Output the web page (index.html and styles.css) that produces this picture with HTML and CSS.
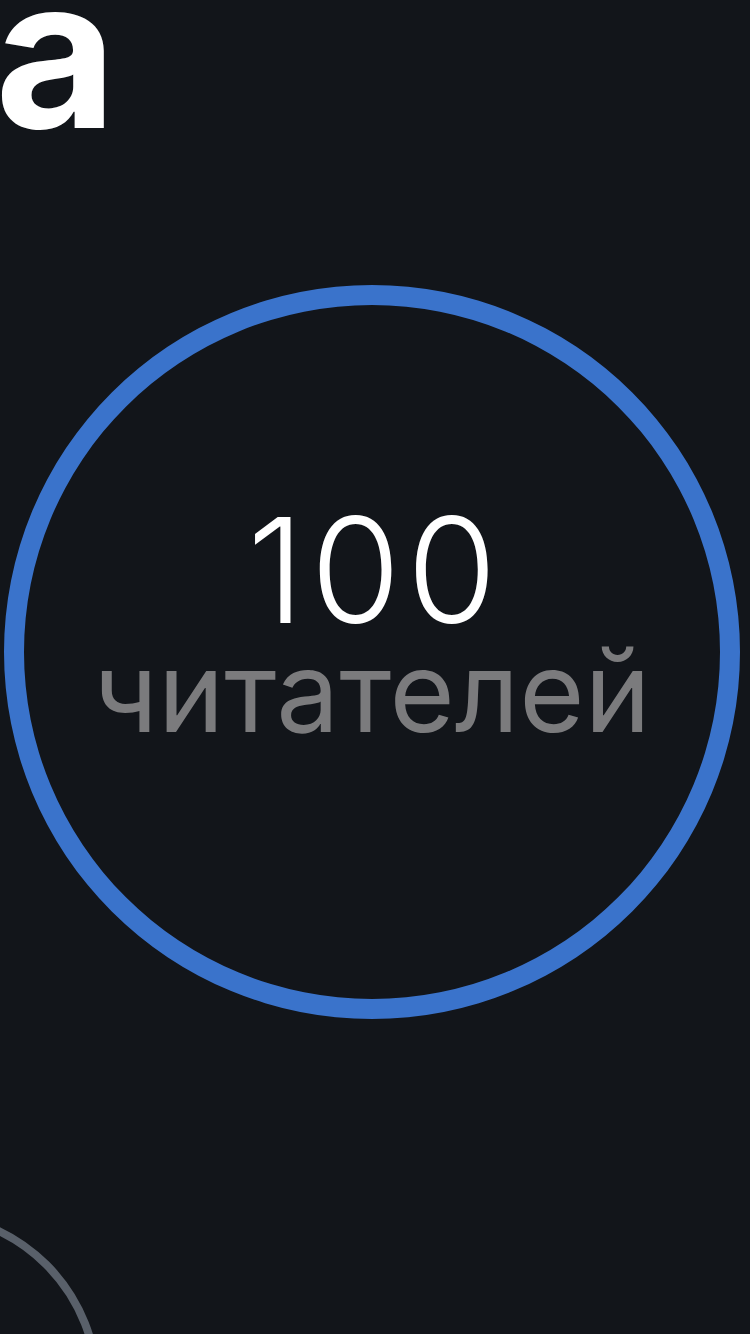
FILE: index.html
```html
<!DOCTYPE html>
<html lang="ru">
<head>
<meta charset="utf-8">
<title>Читатели</title>
<link rel="stylesheet" href="styles.css">
</head>
<body>
<div class="screen">
  <div class="title">а</div>
  <div class="ring">
    <div class="count">100</div>
    <div class="label">читателей</div>
  </div>
  <div class="ring-small"></div>
</div>
</body>
</html>
```
FILE: styles.css
```css
html, body {
  margin: 0;
  padding: 0;
  background: #12151a;
}
.screen {
  width: 750px;
  height: 1334px;
  overflow: hidden;
  background: #12151a;
  font-family: Inter, "Noto Sans", sans-serif;
}
.title {
  height: 160px;
  margin-top: -53px;
  margin-left: -5px;
  font-size: 210px;
  line-height: 210px;
  font-weight: 700;
  color: #ffffff;
}
.ring {
  box-sizing: border-box;
  width: 736px;
  height: 734px;
  margin-top: 178px;
  margin-left: 4px;
  border: 20px solid #3a73cb;
  border-radius: 50%;
  padding-top: 205px;
  text-align: center;
}
.count {
  font-size: 146px;
  line-height: 120px;
  font-weight: 300;
  letter-spacing: 6px;
  text-indent: 6px;
  color: #ffffff;
}
.label {
  margin-top: 6px;
  font-size: 112px;
  line-height: 110px;
  font-weight: 400;
  color: #7b7b7d;
}
.ring-small {
  box-sizing: border-box;
  width: 354px;
  height: 354px;
  margin-top: 191px;
  margin-left: -253px;
  border: 8px solid #59606a;
  border-radius: 50%;
}
```
